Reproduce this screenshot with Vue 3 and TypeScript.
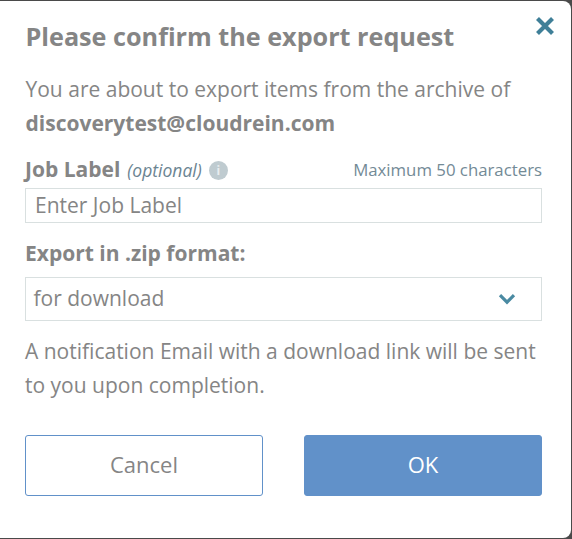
<script setup lang="ts">
const title = 'Please confirm the export request'
const email = 'discoverytest@cloudrein.com'
</script>

<template>
  <div class="page">
    <section class="dialog">
      <button class="close" aria-label="Close">
        <svg width="20" height="20" viewBox="0 0 20 20">
          <path d="M2.5 2.5 L17.5 17.5 M17.5 2.5 L2.5 17.5" stroke="#3f7f98" stroke-width="4.2" fill="none" />
        </svg>
      </button>
      <h1 class="title">{{ title }}</h1>
      <p class="intro">You are about to export items from the archive of<br /><strong>{{ email }}</strong></p>

      <div class="label-row">
        <div class="label-left">
          <span class="label">Job Label</span>
          <em class="optional">(optional)</em>
          <span class="info">i</span>
        </div>
        <span class="max">Maximum 50 characters</span>
      </div>
      <div class="input">Enter Job Label</div>

      <div class="label format">Export in .zip format:</div>
      <div class="select">
        <span class="select-value">for download</span>
        <svg width="18" height="12" viewBox="0 0 18 12">
          <path d="M2 2.2 L9 9.2 L16 2.2" stroke="#4a8aa2" stroke-width="3.2" fill="none" />
        </svg>
      </div>

      <p class="note">A notification Email with a download link will be sent<br />to you upon completion.</p>

      <div class="actions">
        <button class="btn cancel">Cancel</button>
        <button class="btn ok">OK</button>
      </div>
    </section>
  </div>
</template>

<style>
html, body { margin: 0; background: #4a4a4a; }
</style>

<style scoped>
.page {
  width: 572px;
  height: 539px;
  box-sizing: border-box;
  padding: 1px 1px 1px 0;
  background: #4a4a4a;
  font-family: "Open Sans", sans-serif;
  color: #858585;
}
.dialog {
  position: relative;
  height: 100%;
  box-sizing: border-box;
  padding: 19px 29px 0 25px;
  background: #fff;
  border-radius: 0 8px 8px 0;
}
.close {
  position: absolute;
  top: 15px;
  right: 16px;
  padding: 0;
  border: 0;
  background: none;
  display: flex;
}
.title {
  margin: 0 0 0 0.5px;
  font-size: 25.2px;
  line-height: 32px;
  font-weight: 700;
}
.intro {
  margin: 20px 0 0 0.5px;
  font-size: 21px;
  line-height: 34px;
}
.intro strong { font-weight: 700; }
.label-row {
  margin-top: 15px;
  display: flex;
  justify-content: space-between;
  align-items: center;
  height: 28px;
}
.label-left { display: flex; align-items: center; }
.label {
  font-size: 21px;
  font-weight: 700;
  line-height: 28px;
}
.optional {
  margin: 2px 0 0 7px;
  font-size: 17.5px;
  font-style: italic;
  color: #6b8492;
}
.info {
  margin: 2px 0 0 7px;
  width: 19px;
  height: 19px;
  border-radius: 50%;
  background: #bfcbd0;
  color: #e8edef;
  font-size: 12px;
  font-weight: 700;
  line-height: 19px;
  text-align: center;
}
.max {
  font-size: 16.8px;
  color: #738a96;
}
.input {
  margin-top: 5px;
  height: 35px;
  box-sizing: border-box;
  border: 1px solid #d9e0e0;
  padding-left: 9px;
  font-size: 21px;
  line-height: 32px;
}
.format { margin-top: 16px; height: 28px; }
.select {
  margin-top: 10px;
  height: 44px;
  box-sizing: border-box;
  border: 1px solid #d9e0e0;
  padding: 0 25px 0 7.5px;
  display: flex;
  align-items: center;
  justify-content: space-between;
  font-size: 21px;
}
.select-value { margin-top: -2px; }
.note {
  margin: 14px 0 0;
  font-size: 21px;
  line-height: 33.5px;
}
.actions {
  margin-top: 33px;
  display: flex;
  justify-content: space-between;
}
.btn {
  width: 238px;
  height: 61px;
  box-sizing: border-box;
  border-radius: 3px;
  border: 1px solid #6191c9;
  font-family: inherit;
  font-size: 22px;
  padding: 0 0 4px;
}
.cancel { background: #fff; color: #858585; }
.ok { background: #6191c9; color: #fff; }
</style>
